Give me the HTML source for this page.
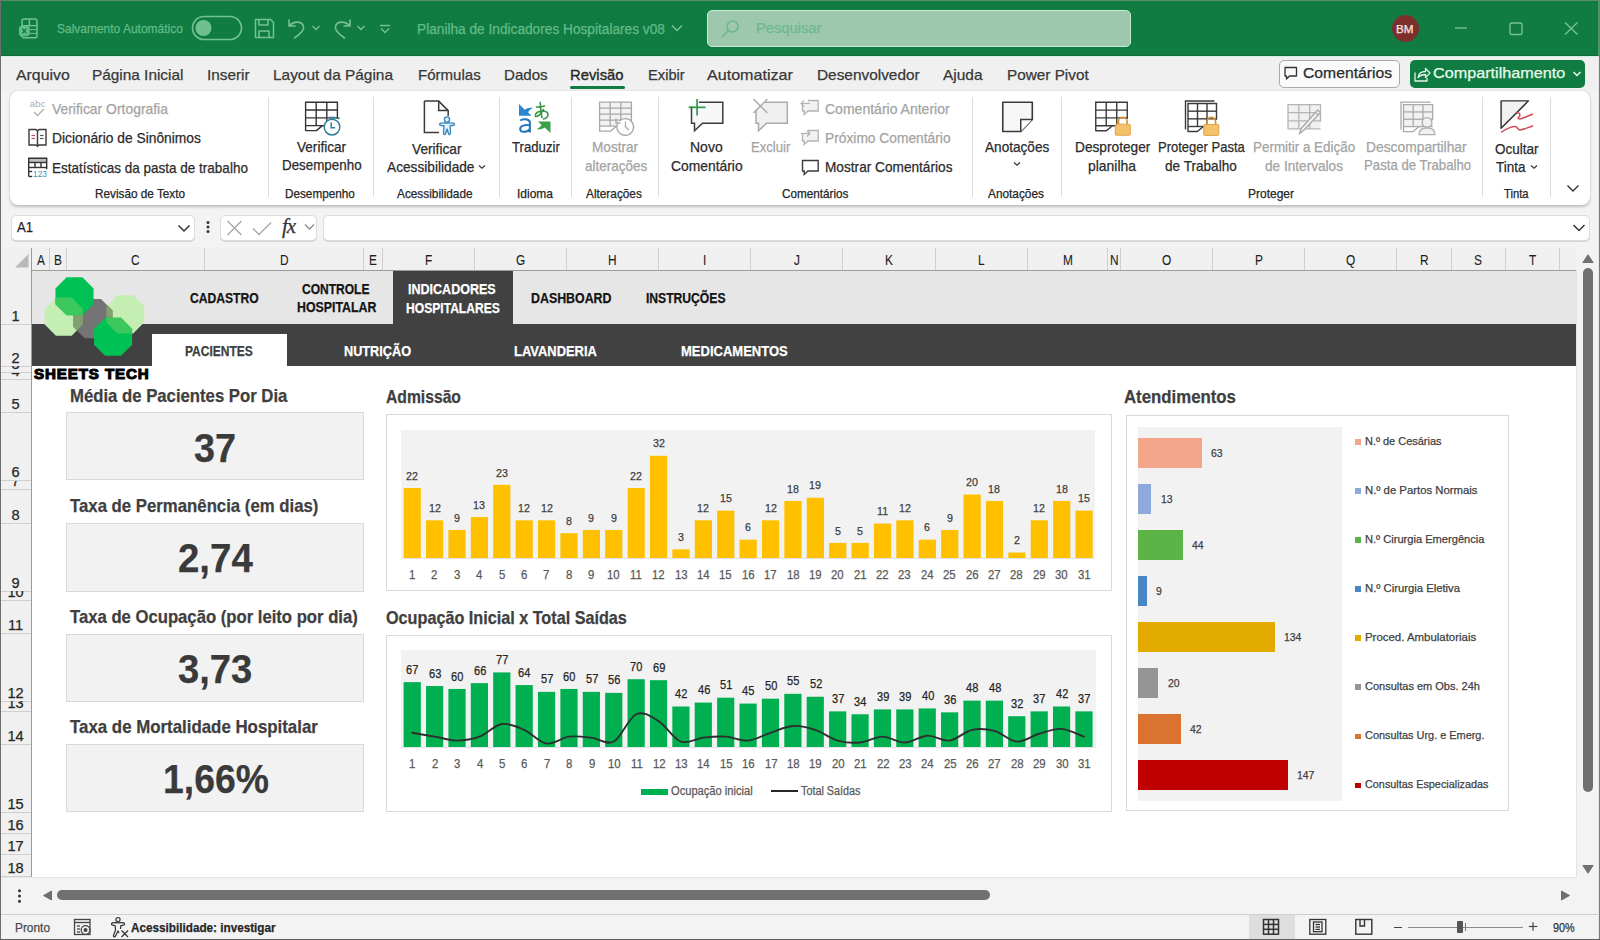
<!DOCTYPE html><html><head><meta charset="utf-8"><title>Excel - Indicadores Hospitalares</title><style>
*{margin:0;padding:0;box-sizing:border-box}
html,body{width:1600px;height:940px;overflow:hidden}
body{position:relative;background:#f3f3f3;font-family:"Liberation Sans",sans-serif}
.a{position:absolute}
.t{position:absolute;white-space:nowrap;transform-origin:0 0;line-height:1;-webkit-text-stroke:0.25px currentColor}
svg.a{overflow:visible}
</style></head><body>
<div class="a" style="left:0px;top:0px;width:1600px;height:56px;background:#107c41;"></div>
<div class="a" style="left:0px;top:0px;width:1600px;height:1px;background:#5b8a6c;"></div>
<svg class="a" style="left:16px;top:16px;" width="24" height="24" viewBox="0 0 24 24"><g fill="none" stroke="#76c193" stroke-width="1.5">
<rect x="6" y="3" width="15" height="18.8" rx="2"/><line x1="13.4" y1="3" x2="13.4" y2="10"/><line x1="6" y1="9.7" x2="21" y2="9.7"/><line x1="13.4" y1="13.6" x2="21" y2="13.6" stroke-width="1"/><line x1="13.4" y1="17.4" x2="21" y2="17.4" stroke-width="1"/></g>
<rect x="3.4" y="10.2" width="9.8" height="9.6" rx="2" fill="#5fbf8a" stroke="#5fbf8a" stroke-width="1"/>
<path d="M6.2 12.6 L10.4 17.4 M10.4 12.6 L6.2 17.4" stroke="#13763f" stroke-width="1.4"/></svg>
<span class="t" style="left:57.00px;top:22.03px;font-size:13.2px;color:#62bb88;transform:scaleX(0.9087);">Salvamento Automático</span>
<svg class="a" style="left:191px;top:15px;" width="52" height="26" viewBox="0 0 52 26"><rect x="1.5" y="1.5" width="49" height="23" rx="11.5" fill="none" stroke="#76c193" stroke-width="1.6"/><circle cx="12.5" cy="13" r="8" fill="#6fc08f"/></svg>
<svg class="a" style="left:253px;top:17px;" width="24" height="24" viewBox="0 0 24 24"><g fill="none" stroke="#76c193" stroke-width="1.5" stroke-linejoin="round"><path d="M2.5 2.5h15l3 3v15h-18z"/><path d="M6 2.5v5.5h9v-5.5"/><path d="M6 20.5v-6.5h10v6.5"/></g></svg>
<svg class="a" style="left:285px;top:17px;" width="24" height="24" viewBox="0 0 24 24"><g fill="none" stroke="#76c193" stroke-width="1.6" stroke-linecap="round" stroke-linejoin="round"><path d="M4 3v6h6"/><path d="M4.5 9 C8 4, 17 3.5, 18.5 9.5 C19.5 13, 16 16.5, 9.5 21"/></g></svg>
<svg class="a" style="left:310px;top:23px;" width="12" height="9" viewBox="0 0 12 9"><path d="M2.5 3 L6 6.5 L9.5 3" fill="none" stroke="#76c193" stroke-width="1.4"/></svg>
<svg class="a" style="left:330px;top:17px;" width="24" height="24" viewBox="0 0 24 24"><g fill="none" stroke="#76c193" stroke-width="1.6" stroke-linecap="round" stroke-linejoin="round"><path d="M20 3v6h-6"/><path d="M19.5 9 C16 4, 7 3.5, 5.5 9.5 C4.5 13, 8 16.5, 14.5 21"/></g></svg>
<svg class="a" style="left:355px;top:23px;" width="12" height="9" viewBox="0 0 12 9"><path d="M2.5 3 L6 6.5 L9.5 3" fill="none" stroke="#76c193" stroke-width="1.4"/></svg>
<svg class="a" style="left:378px;top:23px;" width="14" height="12" viewBox="0 0 14 12"><g fill="none" stroke="#76c193" stroke-width="1.4"><line x1="2" y1="2.5" x2="12" y2="2.5"/><path d="M3 5.5 L7 9.5 L11 5.5"/></g></svg>
<span class="t" style="left:417.00px;top:22.92px;font-size:13.8px;color:#62bb88;transform:scaleX(0.9916);">Planilha de Indicadores Hospitalares v08</span>
<svg class="a" style="left:669px;top:22px;" width="16" height="12" viewBox="0 0 16 12"><path d="M3 3.5 L8 8.5 L13 3.5" fill="none" stroke="#76c193" stroke-width="1.5"/></svg>
<div class="a" style="left:707px;top:10px;width:424px;height:37px;background:#9ec8ae;border:1px solid #c6ebd3;border-radius:5px;"></div>
<svg class="a" style="left:719px;top:17px;" width="24" height="24" viewBox="0 0 24 24"><g fill="none" stroke="#6db98a" stroke-width="1.6"><circle cx="13.5" cy="9.5" r="5.5"/><line x1="9.5" y1="13.5" x2="3.5" y2="19.5" stroke-linecap="round"/></g></svg>
<span class="t" style="left:755.60px;top:21.33px;font-size:14.5px;color:#6db98a;transform:scaleX(1.0141);">Pesquisar</span>
<div class="a" style="left:1391.5px;top:14.5px;width:27px;height:27px;border-radius:50%;background:#7d302b"></div>
<span class="t" style="left:1396.45px;top:23.66px;font-size:10.8px;color:#f5e6e4;transform:scaleX(1.0802);">BM</span>
<svg class="a" style="left:1450px;top:20px;" width="24" height="16" viewBox="0 0 24 16"><line x1="5" y1="8" x2="17" y2="8" stroke="#76c193" stroke-width="1.4"/></svg>
<svg class="a" style="left:1505px;top:18px;" width="20" height="20" viewBox="0 0 20 20"><rect x="5" y="5" width="12" height="11.5" rx="2" fill="none" stroke="#76c193" stroke-width="1.4"/></svg>
<svg class="a" style="left:1560px;top:18px;" width="22" height="20" viewBox="0 0 22 20"><path d="M5 4.5 L17.5 16.5 M17.5 4.5 L5 16.5" stroke="#76c193" stroke-width="1.4"/></svg>
<div class="a" style="left:0px;top:56px;width:1600px;height:35px;background:#f0f0f0;"></div>
<div class="a" style="left:0px;top:55px;width:1600px;height:1px;background:#0e6b38;"></div>
<div class="a" style="left:0px;top:56px;width:1600px;height:1px;background:#d2f1dc;"></div>
<span class="t" style="left:15.90px;top:67.10px;font-size:15px;color:#383838;transform:scaleX(1.0580);">Arquivo</span>
<span class="t" style="left:92.40px;top:67.10px;font-size:15px;color:#383838;transform:scaleX(1.0245);">Página Inicial</span>
<span class="t" style="left:206.50px;top:67.10px;font-size:15px;color:#383838;transform:scaleX(1.0201);">Inserir</span>
<span class="t" style="left:273.00px;top:67.10px;font-size:15px;color:#383838;transform:scaleX(1.0276);">Layout da Página</span>
<span class="t" style="left:418.00px;top:67.10px;font-size:15px;color:#383838;transform:scaleX(1.0030);">Fórmulas</span>
<span class="t" style="left:503.70px;top:67.10px;font-size:15px;color:#383838;transform:scaleX(1.0058);">Dados</span>
<span class="t" style="left:570.00px;top:67.10px;font-size:15px;color:#262626;transform:scaleX(0.9873);-webkit-text-stroke:0.35px #262626;">Revisão</span>
<span class="t" style="left:647.60px;top:67.10px;font-size:15px;color:#383838;transform:scaleX(0.9787);">Exibir</span>
<span class="t" style="left:707.00px;top:67.10px;font-size:15px;color:#383838;transform:scaleX(1.0734);">Automatizar</span>
<span class="t" style="left:817.00px;top:67.10px;font-size:15px;color:#383838;transform:scaleX(1.0255);">Desenvolvedor</span>
<span class="t" style="left:943.00px;top:67.10px;font-size:15px;color:#383838;transform:scaleX(1.0313);">Ajuda</span>
<span class="t" style="left:1006.60px;top:67.10px;font-size:15px;color:#383838;transform:scaleX(1.0209);">Power Pivot</span>
<div class="a" style="left:570px;top:85.5px;width:55px;height:3px;border-radius:1.5px;background:#107c41"></div>
<div class="a" style="left:1278.5px;top:60px;width:121.0px;height:27.5px;background:#fafafa;border:1px solid #a9a9a9;border-radius:5px;"></div>
<svg class="a" style="left:1283px;top:66px;" width="16" height="16" viewBox="0 0 16 16"><path d="M2 1.5h11.5v8.5h-7l-3 3v-3h-1.5z" fill="none" stroke="#333" stroke-width="1.3" stroke-linejoin="round"/></svg>
<span class="t" style="left:1302.50px;top:65.16px;font-size:15.4px;color:#2a2a2a;transform:scaleX(1.0216);">Comentários</span>
<div class="a" style="left:1409.5px;top:60px;width:175.5px;height:27.5px;background:#107c41;border-radius:5px;"></div>
<svg class="a" style="left:1412px;top:64px;" width="20" height="20" viewBox="0 0 20 20"><g fill="none" stroke="#e8f5ec" stroke-width="1.3" stroke-linejoin="round"><path d="M3 8.5v8.5h12v-3"/><path d="M6 13.5c0.5-4 3-6 7.5-6v-3l4.5 4.5-4.5 4.5v-3c-3 0-5.5 1-7.5 3z"/></g></svg>
<span class="t" style="left:1433.20px;top:65.16px;font-size:15.4px;color:#e6fbec;transform:scaleX(1.0523);">Compartilhamento</span>
<svg class="a" style="left:1571px;top:69px;" width="12" height="10" viewBox="0 0 12 10"><path d="M2.5 3 L6 6.5 L9.5 3" fill="none" stroke="#f2faf4" stroke-width="1.4"/></svg>
<div class="a" style="left:10px;top:91px;width:1580px;height:114px;background:#fff;border-radius:8px;box-shadow:0 1.5px 3px rgba(0,0,0,0.22),0 0 1px rgba(0,0,0,0.14)"></div>
<div class="a" style="left:267.9px;top:96.5px;width:1.0px;height:100.5px;background:#dcdcdc;"></div>
<div class="a" style="left:372.9px;top:96.5px;width:1.0px;height:100.5px;background:#dcdcdc;"></div>
<div class="a" style="left:498.7px;top:96.5px;width:1.0px;height:100.5px;background:#dcdcdc;"></div>
<div class="a" style="left:571.3px;top:96.5px;width:1.0px;height:100.5px;background:#dcdcdc;"></div>
<div class="a" style="left:657.9px;top:96.5px;width:1.0px;height:100.5px;background:#dcdcdc;"></div>
<div class="a" style="left:972.3px;top:96.5px;width:1.0px;height:100.5px;background:#dcdcdc;"></div>
<div class="a" style="left:1060.8px;top:96.5px;width:1.0px;height:100.5px;background:#dcdcdc;"></div>
<div class="a" style="left:1482.0px;top:96.5px;width:1.0px;height:100.5px;background:#dcdcdc;"></div>
<div class="a" style="left:1549.9px;top:96.5px;width:1.0px;height:100.5px;background:#dcdcdc;"></div>
<svg class="a" style="left:27px;top:98px;" width="22" height="21" viewBox="0 0 22 21"><text x="2.5" y="8.5" font-family="Liberation Sans" font-size="9.5" fill="#b0b0b0" textLength="16" lengthAdjust="spacingAndGlyphs">abc</text><path d="M7 14 L10.5 17.5 L17 11" fill="none" stroke="#b0b0b0" stroke-width="1.3"/></svg>
<span class="t" style="left:52.00px;top:101.74px;font-size:14.6px;color:#a3a3a3;transform:scaleX(0.9529);">Verificar Ortografia</span>
<svg class="a" style="left:27px;top:128px;" width="22" height="20" viewBox="0 0 22 20"><g fill="none" stroke="#3a3a3a" stroke-width="1.4"><path d="M2 1.5h7l1.5 1.5 1.5-1.5h7v15.5h-7l-1.5 1.3-1.5-1.3h-7z"/><line x1="10.5" y1="3" x2="10.5" y2="17.5"/></g><g stroke-width="1.2"><line x1="4.5" y1="7.5" x2="8" y2="7.5" stroke="#c0505a"/><line x1="4.5" y1="10.5" x2="8" y2="10.5" stroke="#c0505a"/><line x1="13" y1="7.5" x2="16.5" y2="7.5" stroke="#555"/><line x1="13" y1="10.5" x2="16.5" y2="10.5" stroke="#555"/></g></svg>
<span class="t" style="left:52.00px;top:131.24px;font-size:14.6px;color:#2b2b2b;transform:scaleX(0.9465);">Dicionário de Sinônimos</span>
<svg class="a" style="left:27px;top:157px;" width="22" height="22" viewBox="0 0 22 22"><rect x="1.7" y="1.3" width="18" height="4.2" fill="#bdbdbd"/><g fill="none" stroke="#333" stroke-width="1.4"><path d="M1.7 19.5v-18.2h18v11"/><line x1="1.7" y1="5.5" x2="19.7" y2="5.5"/><line x1="1.7" y1="10.5" x2="19.7" y2="10.5"/><line x1="8" y1="5.5" x2="8" y2="10.5"/><line x1="14" y1="5.5" x2="14" y2="10.5"/><path d="M1.7 19.5h3.5"/><path d="M1.7 14.5h3.5"/></g><text x="6" y="19.6" font-family="Liberation Sans" font-size="9" fill="#3f8fb5" textLength="14" lengthAdjust="spacingAndGlyphs">123</text></svg>
<span class="t" style="left:52.00px;top:160.64px;font-size:14.6px;color:#2b2b2b;transform:scaleX(0.9252);">Estatísticas da pasta de trabalho</span>
<span class="t" style="left:95.40px;top:188.83px;font-size:11.9px;color:#262626;transform:scaleX(0.9894);">Revisão de Texto</span>
<svg class="a" style="left:300px;top:98px;" width="48" height="42" viewBox="0 0 48 42"><path d="M5.6 27.6 V4.3 H37.4 V20.833333333333332" fill="none" stroke="#333" stroke-width="1.4"/><line x1="5.6" y1="12.066666666666666" x2="37.4" y2="12.066666666666666" stroke="#333" stroke-width="1.4"/><line x1="5.6" y1="19.833333333333332" x2="37.4" y2="19.833333333333332" stroke="#333" stroke-width="1.4"/><line x1="5.6" y1="27.6" x2="37.4" y2="27.6" stroke="#333" stroke-width="1.4"/><line x1="16.2" y1="4.3" x2="16.2" y2="27.6" stroke="#333" stroke-width="1.4"/><line x1="26.799999999999997" y1="4.3" x2="26.799999999999997" y2="27.6" stroke="#333" stroke-width="1.4"/><path d="M5.6 27.6 V32.6 H16.38 L22.38 27.6" fill="none" stroke="#333" stroke-width="1.4" stroke-linejoin="round"/><g fill="#fff" stroke="#2f7f9c" stroke-width="1.5"><circle cx="32" cy="29.1" r="7.8"/></g><g stroke="#2f7f9c" stroke-width="1.5" fill="none"><line x1="29" y1="19.5" x2="35" y2="19.5"/><line x1="32" y1="19.5" x2="32" y2="21.3"/><line x1="38" y1="21" x2="39.5" y2="19.5"/><path d="M31.2 24.5v5.3h4"/></g></svg>
<span class="t" style="left:297.00px;top:140.04px;font-size:14.6px;color:#2b2b2b;transform:scaleX(0.9309);">Verificar</span>
<span class="t" style="left:282.00px;top:158.44px;font-size:14.6px;color:#2b2b2b;transform:scaleX(0.9167);">Desempenho</span>
<span class="t" style="left:285.20px;top:188.83px;font-size:11.9px;color:#262626;transform:scaleX(0.9862);">Desempenho</span>
<svg class="a" style="left:420px;top:98px;" width="40" height="40" viewBox="0 0 40 40"><path d="M4.4 3.1h14.3l9.5 9.5v5.5 M19 34.5h-14.6v-31.4" fill="none" stroke="#3a3a3a" stroke-width="1.5"/><path d="M18.7 3.1v9.5h9.5" fill="none" stroke="#3a3a3a" stroke-width="1.5"/><g fill="#e6f4fb" stroke="#3a88bf" stroke-width="1.4" stroke-linejoin="round"><circle cx="27" cy="21.5" r="2.6"/><path d="M20 25.5 C22 24.5,24.5 25,27 25 C29.5 25,32 24.5,34 25.5 C35 26.2,34.5 27.5,33 27.5 L30 27.8 L30.5 35 C30.5 37,28.8 37,28.5 35.5 L27 31 L25.5 35.5 C25 37,23.5 37,23.5 35 L24 27.8 L21 27.5 C19.5 27.5,19 26.2,20 25.5z"/></g></svg>
<span class="t" style="left:412.00px;top:141.64px;font-size:14.6px;color:#2b2b2b;transform:scaleX(0.9385);">Verificar</span>
<span class="t" style="left:386.70px;top:159.54px;font-size:14.6px;color:#2b2b2b;transform:scaleX(0.9375);">Acessibilidade</span>
<svg class="a" style="left:476px;top:162px;" width="12" height="10" viewBox="0 0 12 10"><path d="M3 3.5 L6 6.3 L9 3.5" fill="none" stroke="#333" stroke-width="1.2"/></svg>
<span class="t" style="left:397.30px;top:188.83px;font-size:11.9px;color:#262626;transform:scaleX(0.9938);">Acessibilidade</span>
<svg class="a" style="left:514px;top:98px;" width="40" height="38" viewBox="0 0 40 38"><path d="M5 6 L5 17.8 L17.5 17.8 L14 14.3 C15.2 12.3,16.8 10.8,19 10 C15.8 9.5,13 10.2,10.8 11.8 Z" fill="#2a86d1"/><path d="M6.3 22.6 C8 20.6,14.8 20.4,15.9 24 L15.9 34.6 M15.9 27.2 C10.5 26.6,6.2 27.6,6.2 30.9 C6.2 34.6,13 34.9,15.9 30.8" fill="none" stroke="#2677bd" stroke-width="2"/><g fill="none" stroke="#3b9447" stroke-width="1.6" stroke-linecap="round"><path d="M22.5 9 C25 9.3,28 8.8,30.5 8"/><path d="M26.2 4.5 C26.5 9,26.8 14,28 19.5"/><path d="M29.5 11.5 C27.5 15,25 18,22.5 18.5 C20.5 18.8,21 15,24.5 13.8 C28.5 12.5,33.5 13,34 16 C34.5 18.5,32 20.5,29.5 21"/></g><path d="M36.5 35 L36.5 23.5 L24 23.5 L27.5 27 C26.3 29,24.7 30.5,22.5 31.3 C25.7 31.8,28.5 31.1,30.7 29.5 Z" fill="#3aa14b"/></svg>
<span class="t" style="left:512.20px;top:140.14px;font-size:14.6px;color:#2b2b2b;transform:scaleX(0.9019);">Traduzir</span>
<span class="t" style="left:516.50px;top:188.83px;font-size:11.9px;color:#262626;transform:scaleX(1.0076);">Idioma</span>
<svg class="a" style="left:594px;top:98px;" width="44" height="40" viewBox="0 0 44 40"><rect x="5.6" y="4.2" width="31.8" height="24" fill="#f3f3f3"/><path d="M5.6 28.2 V4.2 H37.4 V23.2" fill="none" stroke="#a8a8a8" stroke-width="1.3"/><line x1="5.6" y1="10.2" x2="37.4" y2="10.2" stroke="#a8a8a8" stroke-width="1.3"/><line x1="5.6" y1="16.2" x2="37.4" y2="16.2" stroke="#a8a8a8" stroke-width="1.3"/><line x1="5.6" y1="22.2" x2="37.4" y2="22.2" stroke="#a8a8a8" stroke-width="1.3"/><line x1="5.6" y1="28.2" x2="37.4" y2="28.2" stroke="#a8a8a8" stroke-width="1.3"/><line x1="16.2" y1="4.2" x2="16.2" y2="28.2" stroke="#a8a8a8" stroke-width="1.3"/><line x1="26.799999999999997" y1="4.2" x2="26.799999999999997" y2="28.2" stroke="#a8a8a8" stroke-width="1.3"/><path d="M5.6 28.2 V33.2 H16.38 L22.38 28.2" fill="none" stroke="#a8a8a8" stroke-width="1.3" stroke-linejoin="round"/><g fill="#fff" stroke="#a8a8a8" stroke-width="1.4"><path d="M23.5 26 A8.3 8.3 0 1 0 25.5 23"/></g><g fill="none" stroke="#a8a8a8" stroke-width="1.3"><path d="M22 20.5v4.5h4.5"/><path d="M31.5 23.5v5.5l3.5 3"/></g></svg>
<span class="t" style="left:592.30px;top:140.14px;font-size:14.6px;color:#a3a3a3;transform:scaleX(0.9314);">Mostrar</span>
<span class="t" style="left:584.80px;top:158.84px;font-size:14.6px;color:#a3a3a3;transform:scaleX(0.9261);">alterações</span>
<span class="t" style="left:586.25px;top:188.83px;font-size:11.9px;color:#262626;transform:scaleX(0.9942);">Alterações</span>
<svg class="a" style="left:684px;top:96px;" width="44" height="38" viewBox="0 0 44 38"><path d="M7.5 10.2 V27.3 H10.5 L10.5 34.8 L18.5 27.3 H38.8 V6.3 H15" fill="#f7f7f7" stroke="#3c3c3c" stroke-width="1.5" stroke-linejoin="miter"/><g stroke="#2e9a4a" stroke-width="1.7"><line x1="13.1" y1="3" x2="13.1" y2="19.6"/><line x1="4.6" y1="11.35" x2="21.6" y2="11.35"/></g></svg>
<span class="t" style="left:690.30px;top:140.24px;font-size:14.6px;color:#2b2b2b;transform:scaleX(0.9592);">Novo</span>
<span class="t" style="left:670.60px;top:158.84px;font-size:14.6px;color:#2b2b2b;transform:scaleX(0.9499);">Comentário</span>
<svg class="a" style="left:749px;top:96px;" width="44" height="38" viewBox="0 0 44 38"><path d="M7 14 V27.3 H9.5 L9.5 34.8 L17.5 27.3 H38.3 V6.3 H16" fill="#f0f0f0" stroke="#ababab" stroke-width="1.5"/><g stroke="#ababab" stroke-width="1.4"><line x1="4.4" y1="3" x2="18.4" y2="17"/><line x1="18.4" y1="3" x2="4.4" y2="17"/></g></svg>
<span class="t" style="left:751.25px;top:140.24px;font-size:14.6px;color:#a3a3a3;transform:scaleX(0.8973);">Excluir</span>
<svg class="a" style="left:799px;top:99px;" width="22" height="18" viewBox="0 0 22 18"><path d="M3.5 5 V12 H5.2 L5.2 15.5 L9 12 H19.2 V1.5 H9" fill="#f2f2f2" stroke="#b3b3b3" stroke-width="1.3"/><g fill="none" stroke="#b3b3b3" stroke-width="1.2"><line x1="2" y1="4.5" x2="11" y2="4.5"/><path d="M5 1.5 L2 4.5 L5 7.5"/></g></svg>
<svg class="a" style="left:799px;top:129px;" width="22" height="18" viewBox="0 0 22 18"><path d="M3.5 5 V12 H5.2 L5.2 15.5 L9 12 H19.2 V1.5 H9" fill="#f2f2f2" stroke="#b3b3b3" stroke-width="1.3"/><g fill="none" stroke="#b3b3b3" stroke-width="1.2"><line x1="2" y1="4.5" x2="11" y2="4.5"/><path d="M8 1.5 L11 4.5 L8 7.5"/></g></svg>
<svg class="a" style="left:799px;top:159px;" width="22" height="18" viewBox="0 0 22 18"><path d="M3.5 1.5 V12 H5.2 L5.2 15.5 L9 12 H19.2 V1.5 Z" fill="#fff" stroke="#3a3a3a" stroke-width="1.4"/></svg>
<span class="t" style="left:825.00px;top:101.84px;font-size:14.6px;color:#a3a3a3;transform:scaleX(0.9605);">Comentário Anterior</span>
<span class="t" style="left:825.00px;top:130.84px;font-size:14.6px;color:#a3a3a3;transform:scaleX(0.9438);">Próximo Comentário</span>
<span class="t" style="left:825.00px;top:159.94px;font-size:14.6px;color:#2b2b2b;transform:scaleX(0.9355);">Mostrar Comentários</span>
<span class="t" style="left:781.90px;top:188.83px;font-size:11.9px;color:#262626;transform:scaleX(0.9856);">Comentários</span>
<svg class="a" style="left:998px;top:98px;" width="40" height="38" viewBox="0 0 40 38"><path d="M4.75 4.25 H34.3 V21.5 L22.75 33.5 H4.75 Z" fill="#f6f6f6" stroke="#3a3a3a" stroke-width="1.6" stroke-linejoin="round"/><path d="M34.3 21.5 H22.75 V33.5" fill="#fff" stroke="#3a3a3a" stroke-width="1.5"/></svg>
<span class="t" style="left:985.30px;top:140.14px;font-size:14.6px;color:#2b2b2b;transform:scaleX(0.9321);">Anotações</span>
<svg class="a" style="left:1011px;top:159px;" width="12" height="10" viewBox="0 0 12 10"><path d="M3 3.5 L6 6.3 L9 3.5" fill="none" stroke="#333" stroke-width="1.2"/></svg>
<span class="t" style="left:988.10px;top:188.83px;font-size:11.9px;color:#262626;transform:scaleX(0.9942);">Anotações</span>
<svg class="a" style="left:1090px;top:98px;" width="44" height="40" viewBox="0 0 44 40"><path d="M5.75 27.75 V4.25 H37.25 V20.916666666666664" fill="none" stroke="#3a3a3a" stroke-width="1.4"/><line x1="5.75" y1="12.083333333333332" x2="37.25" y2="12.083333333333332" stroke="#3a3a3a" stroke-width="1.4"/><line x1="5.75" y1="19.916666666666664" x2="37.25" y2="19.916666666666664" stroke="#3a3a3a" stroke-width="1.4"/><line x1="5.75" y1="27.75" x2="37.25" y2="27.75" stroke="#3a3a3a" stroke-width="1.4"/><line x1="16.25" y1="4.25" x2="16.25" y2="27.75" stroke="#3a3a3a" stroke-width="1.4"/><line x1="26.75" y1="4.25" x2="26.75" y2="27.75" stroke="#3a3a3a" stroke-width="1.4"/><path d="M5.75 27.75 V32.75 H16.4 L22.4 27.75" fill="none" stroke="#3a3a3a" stroke-width="1.4" stroke-linejoin="round"/><g><path d="M28.5 26 V23.5 A4.3 4.3 0 0 1 37.1 23.5 V26" fill="none" stroke="#d9902a" stroke-width="1.6"/><rect x="25.3" y="26.2" width="15" height="11" rx="1" fill="#f3c26b" stroke="#e0a040" stroke-width="1"/></g></svg>
<span class="t" style="left:1074.60px;top:140.14px;font-size:14.6px;color:#2b2b2b;transform:scaleX(0.9386);">Desproteger</span>
<span class="t" style="left:1088.00px;top:158.84px;font-size:14.6px;color:#2b2b2b;transform:scaleX(0.9529);">planilha</span>
<svg class="a" style="left:1180px;top:96px;" width="44" height="42" viewBox="0 0 44 42"><path d="M8 30.5 V7.5 H36.5 V23.833333333333336" fill="none" stroke="#3a3a3a" stroke-width="1.4"/><line x1="8" y1="15.166666666666668" x2="36.5" y2="15.166666666666668" stroke="#3a3a3a" stroke-width="1.4"/><line x1="8" y1="22.833333333333336" x2="36.5" y2="22.833333333333336" stroke="#3a3a3a" stroke-width="1.4"/><line x1="8" y1="30.5" x2="36.5" y2="30.5" stroke="#3a3a3a" stroke-width="1.4"/><line x1="17.5" y1="7.5" x2="17.5" y2="30.5" stroke="#3a3a3a" stroke-width="1.4"/><line x1="27.0" y1="7.5" x2="27.0" y2="30.5" stroke="#3a3a3a" stroke-width="1.4"/><path d="M8 30.5 V35.5 H17.35 L23.35 30.5" fill="none" stroke="#3a3a3a" stroke-width="1.4" stroke-linejoin="round"/><path d="M5.5 33.5 V5.0 H34.5" fill="none" stroke="#3a3a3a" stroke-width="1.4"/><g><path d="M27.0 28.2 V25.7 A4.3 4.3 0 0 1 35.6 25.7 V28.2" fill="none" stroke="#d9902a" stroke-width="1.6"/><rect x="23.8" y="28.4" width="15" height="11" rx="1" fill="#f3c26b" stroke="#e0a040" stroke-width="1"/></g></svg>
<span class="t" style="left:1157.90px;top:140.14px;font-size:14.6px;color:#2b2b2b;transform:scaleX(0.8910);">Proteger Pasta</span>
<span class="t" style="left:1165.40px;top:158.84px;font-size:14.6px;color:#2b2b2b;transform:scaleX(0.9310);">de Trabalho</span>
<svg class="a" style="left:1283px;top:98px;" width="44" height="40" viewBox="0 0 44 40"><rect x="5" y="6.6" width="32.5" height="24.3" fill="#f0f0f0"/><path d="M5 30.9 V6.6 H37.5 V23.799999999999997" fill="none" stroke="#b5b5b5" stroke-width="1.3"/><line x1="5" y1="14.7" x2="37.5" y2="14.7" stroke="#b5b5b5" stroke-width="1.3"/><line x1="5" y1="22.799999999999997" x2="37.5" y2="22.799999999999997" stroke="#b5b5b5" stroke-width="1.3"/><line x1="5" y1="30.9" x2="37.5" y2="30.9" stroke="#b5b5b5" stroke-width="1.3"/><line x1="15.833333333333334" y1="6.6" x2="15.833333333333334" y2="30.9" stroke="#b5b5b5" stroke-width="1.3"/><line x1="26.666666666666668" y1="6.6" x2="26.666666666666668" y2="30.9" stroke="#b5b5b5" stroke-width="1.3"/><g><path d="M37.5 14.5 L21 32 L16.5 35.8 L18.2 30.5 L34.6 12 Z" fill="#f4f4f4" stroke="#ababab" stroke-width="1.4" stroke-linejoin="round"/><line x1="32.5" y1="14.5" x2="35.5" y2="17.3" stroke="#ababab" stroke-width="1.2"/></g></svg>
<span class="t" style="left:1253.10px;top:140.14px;font-size:14.6px;color:#a3a3a3;transform:scaleX(0.9192);">Permitir a Edição</span>
<span class="t" style="left:1264.75px;top:158.84px;font-size:14.6px;color:#a3a3a3;transform:scaleX(0.9332);">de Intervalos</span>
<svg class="a" style="left:1396px;top:96px;" width="44" height="42" viewBox="0 0 44 42"><rect x="7.5" y="8.6" width="29.2" height="22" fill="#f1f1f1"/><path d="M7.5 30.6 V8.6 H36.7 V24.266666666666666" fill="none" stroke="#aaaaaa" stroke-width="1.3"/><line x1="7.5" y1="15.933333333333334" x2="36.7" y2="15.933333333333334" stroke="#aaaaaa" stroke-width="1.3"/><line x1="7.5" y1="23.266666666666666" x2="36.7" y2="23.266666666666666" stroke="#aaaaaa" stroke-width="1.3"/><line x1="7.5" y1="30.6" x2="36.7" y2="30.6" stroke="#aaaaaa" stroke-width="1.3"/><line x1="17.233333333333334" y1="8.6" x2="17.233333333333334" y2="30.6" stroke="#aaaaaa" stroke-width="1.3"/><line x1="26.966666666666665" y1="8.6" x2="26.966666666666665" y2="30.6" stroke="#aaaaaa" stroke-width="1.3"/><path d="M7.5 30.6 V35.6 H17.153333333333332 L23.153333333333332 30.6" fill="none" stroke="#aaaaaa" stroke-width="1.3" stroke-linejoin="round"/><path d="M5.0 33.6 V6.1 H34.7" fill="none" stroke="#aaaaaa" stroke-width="1.3"/><g fill="#f1f1f1" stroke="#b0b0b0" stroke-width="1.4"><circle cx="31" cy="26.4" r="4.8"/><path d="M23 38.6 C23 34,26.5 32,31 32 C35.5 32,39 34,39 38.6 Z"/></g></svg>
<span class="t" style="left:1366.30px;top:139.99px;font-size:14.6px;color:#a3a3a3;transform:scaleX(0.9474);">Descompartilhar</span>
<span class="t" style="left:1363.60px;top:158.44px;font-size:14.6px;color:#a3a3a3;transform:scaleX(0.9045);">Pasta de Trabalho</span>
<span class="t" style="left:1248.40px;top:188.83px;font-size:11.9px;color:#262626;transform:scaleX(1.0080);">Proteger</span>
<svg class="a" style="left:1496px;top:96px;" width="42" height="40" viewBox="0 0 42 40"><path d="M5.1 4.85 H32.5 L5.1 32.3 Z" fill="#f1f1f1" stroke="#333" stroke-width="1.45" stroke-linejoin="round"/><g fill="none" stroke="#cf4a5a" stroke-width="1.5" stroke-linecap="round"><path d="M21 16.5 C24 17,25 19.5,22.5 21.5 C21 23,24 23.5,27 22 L36.5 18.3"/><path d="M5.5 36 C10 33,15 30.5,19.5 30.5 C22 30.5,21 34.5,24.5 34 C28 33.5,32 31.5,36.5 30"/></g></svg>
<span class="t" style="left:1495.20px;top:141.64px;font-size:14.6px;color:#2b2b2b;transform:scaleX(0.9225);">Ocultar</span>
<span class="t" style="left:1495.70px;top:159.54px;font-size:14.6px;color:#2b2b2b;transform:scaleX(0.9237);">Tinta</span>
<svg class="a" style="left:1528px;top:162px;" width="12" height="10" viewBox="0 0 12 10"><path d="M3 3.5 L6 6.3 L9 3.5" fill="none" stroke="#333" stroke-width="1.2"/></svg>
<span class="t" style="left:1504.00px;top:188.83px;font-size:11.9px;color:#262626;transform:scaleX(0.9412);">Tinta</span>
<svg class="a" style="left:1563px;top:181px;" width="20" height="14" viewBox="0 0 20 14"><path d="M4.5 4.5 L10 10 L15.5 4.5" fill="none" stroke="#333" stroke-width="1.4"/></svg>
<div class="a" style="left:10.5px;top:214.5px;width:184.5px;height:26.5px;background:#fff;border:1px solid #dcdcdc;border-radius:5px;box-shadow:0 1px 0 #d2d2d2;"></div>
<span class="t" style="left:17.00px;top:218.93px;font-size:15.2px;color:#262626;transform:scaleX(0.8610);">A1</span>
<svg class="a" style="left:174px;top:220px;" width="20" height="16" viewBox="0 0 20 16"><path d="M4.5 5.5 L10 11 L15.5 5.5" fill="none" stroke="#333" stroke-width="1.5"/></svg>
<svg class="a" style="left:204px;top:218px;" width="8" height="18" viewBox="0 0 8 18"><g fill="#333"><circle cx="4" cy="4.5" r="1.5"/><circle cx="4" cy="9" r="1.5"/><circle cx="4" cy="13.5" r="1.5"/></g></svg>
<div class="a" style="left:220px;top:214.5px;width:97px;height:26.5px;background:#fff;border:1px solid #dcdcdc;border-radius:5px;box-shadow:0 1px 0 #d2d2d2;"></div>
<svg class="a" style="left:224px;top:219px;" width="20" height="18" viewBox="0 0 20 18"><path d="M3.5 2 L17.5 16 M17.5 2 L3.5 16" stroke="#a8a8a8" stroke-width="1.4"/></svg>
<svg class="a" style="left:250px;top:219px;" width="24" height="18" viewBox="0 0 24 18"><path d="M3 9.5 L9 15.5 L21 3.5" fill="none" stroke="#a8a8a8" stroke-width="1.4"/></svg>
<span class="t" style="left:282px;top:214px;font-family:'Liberation Serif';font-style:italic;font-size:21px;line-height:24px;color:#333;letter-spacing:-1px">fx</span>
<svg class="a" style="left:302px;top:220px;" width="16" height="14" viewBox="0 0 16 14"><path d="M3 4.5 L7.5 9 L12 4.5" fill="none" stroke="#8a8a8a" stroke-width="1.3"/></svg>
<div class="a" style="left:323px;top:214.5px;width:1267px;height:26.5px;background:#fff;border:1px solid #dcdcdc;border-radius:5px;box-shadow:0 1px 0 #d2d2d2;"></div>
<svg class="a" style="left:1570px;top:220px;" width="18" height="16" viewBox="0 0 18 16"><path d="M3.5 5 L9 10.5 L14.5 5" fill="none" stroke="#333" stroke-width="1.5"/></svg>
<div class="a" style="left:1px;top:247px;width:1575px;height:23px;background:#f0f0f0;"></div>
<div class="a" style="left:49.0px;top:248px;width:1.0px;height:22px;background:#cfcfcf;"></div>
<span class="t" style="left:36.54px;top:253.52px;font-size:13.8px;color:#1e1e1e;transform:scaleX(0.8600);-webkit-text-stroke:0.1px #1e1e1e;">A</span>
<div class="a" style="left:66.0px;top:248px;width:1.0px;height:22px;background:#cfcfcf;"></div>
<span class="t" style="left:54.04px;top:253.52px;font-size:13.8px;color:#1e1e1e;transform:scaleX(0.8600);-webkit-text-stroke:0.1px #1e1e1e;">B</span>
<div class="a" style="left:203.9px;top:248px;width:1.0px;height:22px;background:#cfcfcf;"></div>
<span class="t" style="left:131.16px;top:253.52px;font-size:13.8px;color:#1e1e1e;transform:scaleX(0.8600);-webkit-text-stroke:0.1px #1e1e1e;">C</span>
<div class="a" style="left:363.1px;top:248px;width:1.0px;height:22px;background:#cfcfcf;"></div>
<span class="t" style="left:279.71px;top:253.52px;font-size:13.8px;color:#1e1e1e;transform:scaleX(0.8600);-webkit-text-stroke:0.1px #1e1e1e;">D</span>
<div class="a" style="left:381.5px;top:248px;width:1.0px;height:22px;background:#cfcfcf;"></div>
<span class="t" style="left:368.84px;top:253.52px;font-size:13.8px;color:#1e1e1e;transform:scaleX(0.8600);-webkit-text-stroke:0.1px #1e1e1e;">E</span>
<div class="a" style="left:473.9px;top:248px;width:1.0px;height:22px;background:#cfcfcf;"></div>
<span class="t" style="left:424.58px;top:253.52px;font-size:13.8px;color:#1e1e1e;transform:scaleX(0.8600);-webkit-text-stroke:0.1px #1e1e1e;">F</span>
<div class="a" style="left:565.9px;top:248px;width:1.0px;height:22px;background:#cfcfcf;"></div>
<span class="t" style="left:515.79px;top:253.52px;font-size:13.8px;color:#1e1e1e;transform:scaleX(0.8600);-webkit-text-stroke:0.1px #1e1e1e;">G</span>
<div class="a" style="left:657.9px;top:248px;width:1.0px;height:22px;background:#cfcfcf;"></div>
<span class="t" style="left:608.11px;top:253.52px;font-size:13.8px;color:#1e1e1e;transform:scaleX(0.8600);-webkit-text-stroke:0.1px #1e1e1e;">H</span>
<div class="a" style="left:749.9px;top:248px;width:1.0px;height:22px;background:#cfcfcf;"></div>
<span class="t" style="left:702.75px;top:253.52px;font-size:13.8px;color:#1e1e1e;transform:scaleX(0.8600);-webkit-text-stroke:0.1px #1e1e1e;">I</span>
<div class="a" style="left:842.1px;top:248px;width:1.0px;height:22px;background:#cfcfcf;"></div>
<span class="t" style="left:793.53px;top:253.52px;font-size:13.8px;color:#1e1e1e;transform:scaleX(0.8600);-webkit-text-stroke:0.1px #1e1e1e;">J</span>
<div class="a" style="left:934.5px;top:248px;width:1.0px;height:22px;background:#cfcfcf;"></div>
<span class="t" style="left:884.84px;top:253.52px;font-size:13.8px;color:#1e1e1e;transform:scaleX(0.8600);-webkit-text-stroke:0.1px #1e1e1e;">K</span>
<div class="a" style="left:1026.9px;top:248px;width:1.0px;height:22px;background:#cfcfcf;"></div>
<span class="t" style="left:977.91px;top:253.52px;font-size:13.8px;color:#1e1e1e;transform:scaleX(0.8600);-webkit-text-stroke:0.1px #1e1e1e;">L</span>
<div class="a" style="left:1107.1px;top:248px;width:1.0px;height:22px;background:#cfcfcf;"></div>
<span class="t" style="left:1062.56px;top:253.52px;font-size:13.8px;color:#1e1e1e;transform:scaleX(0.8600);-webkit-text-stroke:0.1px #1e1e1e;">M</span>
<div class="a" style="left:1119.9px;top:248px;width:1.0px;height:22px;background:#cfcfcf;"></div>
<span class="t" style="left:1109.71px;top:253.52px;font-size:13.8px;color:#1e1e1e;transform:scaleX(0.8600);-webkit-text-stroke:0.1px #1e1e1e;">N</span>
<div class="a" style="left:1212.0px;top:248px;width:1.0px;height:22px;background:#cfcfcf;"></div>
<span class="t" style="left:1161.84px;top:253.52px;font-size:13.8px;color:#1e1e1e;transform:scaleX(0.8600);-webkit-text-stroke:0.1px #1e1e1e;">O</span>
<div class="a" style="left:1304.0px;top:248px;width:1.0px;height:22px;background:#cfcfcf;"></div>
<span class="t" style="left:1254.54px;top:253.52px;font-size:13.8px;color:#1e1e1e;transform:scaleX(0.8600);-webkit-text-stroke:0.1px #1e1e1e;">P</span>
<div class="a" style="left:1396.0px;top:248px;width:1.0px;height:22px;background:#cfcfcf;"></div>
<span class="t" style="left:1345.89px;top:253.52px;font-size:13.8px;color:#1e1e1e;transform:scaleX(0.8600);-webkit-text-stroke:0.1px #1e1e1e;">Q</span>
<div class="a" style="left:1450.9px;top:248px;width:1.0px;height:22px;background:#cfcfcf;"></div>
<span class="t" style="left:1419.66px;top:253.52px;font-size:13.8px;color:#1e1e1e;transform:scaleX(0.8600);-webkit-text-stroke:0.1px #1e1e1e;">R</span>
<div class="a" style="left:1504.9px;top:248px;width:1.0px;height:22px;background:#cfcfcf;"></div>
<span class="t" style="left:1474.44px;top:253.52px;font-size:13.8px;color:#1e1e1e;transform:scaleX(0.8600);-webkit-text-stroke:0.1px #1e1e1e;">S</span>
<div class="a" style="left:1559.3px;top:248px;width:1.0px;height:22px;background:#cfcfcf;"></div>
<span class="t" style="left:1528.98px;top:253.52px;font-size:13.8px;color:#1e1e1e;transform:scaleX(0.8600);-webkit-text-stroke:0.1px #1e1e1e;">T</span>
<div class="a" style="left:1px;top:269.5px;width:1575px;height:1.0px;background:#9b9b9b;"></div>
<svg class="a" style="left:13px;top:252px;" width="18" height="17" viewBox="0 0 18 17"><path d="M15.5 2 V15.5 H2 Z" fill="#b8b8b8"/></svg>
<div class="a" style="left:31px;top:248px;width:1px;height:629px;background:#9b9b9b;"></div>
<div class="a" style="left:1px;top:270px;width:30px;height:607px;background:#f0f0f0;"></div>
<div class="a" style="left:1px;top:270px;width:30px;height:607px;overflow:hidden">
<div class="a" style="left:0;top:53.5px;width:30px;height:1px;background:#cfcfcf"></div>
<div class="a" style="left:0;top:0px;width:30px;height:54px;overflow:hidden">
<span class="t" style="left:10.45px;top:38.64px;font-size:14.6px;color:#262626">1</span></div>
<div class="a" style="left:0;top:95.5px;width:30px;height:1px;background:#cfcfcf"></div>
<div class="a" style="left:0;top:54px;width:30px;height:42px;overflow:hidden">
<span class="t" style="left:10.45px;top:26.64px;font-size:14.6px;color:#262626">2</span></div>
<div class="a" style="left:0;top:102.0px;width:30px;height:1px;background:#cfcfcf"></div>
<div class="a" style="left:0;top:96px;width:30px;height:6.5px;overflow:hidden">
<span class="t" style="left:10.45px;top:-8.86px;font-size:14.6px;color:#262626">3</span></div>
<div class="a" style="left:0;top:109.0px;width:30px;height:1px;background:#cfcfcf"></div>
<div class="a" style="left:0;top:102.5px;width:30px;height:7.0px;overflow:hidden">
<span class="t" style="left:10.45px;top:-8.36px;font-size:14.6px;color:#262626">4</span></div>
<div class="a" style="left:0;top:142.0px;width:30px;height:1px;background:#cfcfcf"></div>
<div class="a" style="left:0;top:109.5px;width:30px;height:33.0px;overflow:hidden">
<span class="t" style="left:10.45px;top:17.64px;font-size:14.6px;color:#262626">5</span></div>
<div class="a" style="left:0;top:210.0px;width:30px;height:1px;background:#cfcfcf"></div>
<div class="a" style="left:0;top:142.5px;width:30px;height:68.0px;overflow:hidden">
<span class="t" style="left:10.45px;top:52.64px;font-size:14.6px;color:#262626">6</span></div>
<div class="a" style="left:0;top:219.0px;width:30px;height:1px;background:#cfcfcf"></div>
<div class="a" style="left:0;top:210.5px;width:30px;height:9.0px;overflow:hidden">
<span class="t" style="left:10.45px;top:-6.36px;font-size:14.6px;color:#262626">7</span></div>
<div class="a" style="left:0;top:252.5px;width:30px;height:1px;background:#cfcfcf"></div>
<div class="a" style="left:0;top:219.5px;width:30px;height:33.5px;overflow:hidden">
<span class="t" style="left:10.45px;top:18.14px;font-size:14.6px;color:#262626">8</span></div>
<div class="a" style="left:0;top:320.5px;width:30px;height:1px;background:#cfcfcf"></div>
<div class="a" style="left:0;top:253px;width:30px;height:68px;overflow:hidden">
<span class="t" style="left:10.45px;top:52.64px;font-size:14.6px;color:#262626">9</span></div>
<div class="a" style="left:0;top:329.70000000000005px;width:30px;height:1px;background:#cfcfcf"></div>
<div class="a" style="left:0;top:321px;width:30px;height:9.200000000000045px;overflow:hidden">
<span class="t" style="left:6.38px;top:-6.16px;font-size:14.6px;color:#262626">10</span></div>
<div class="a" style="left:0;top:363.0px;width:30px;height:1px;background:#cfcfcf"></div>
<div class="a" style="left:0;top:330.20000000000005px;width:30px;height:33.299999999999955px;overflow:hidden">
<span class="t" style="left:6.93px;top:17.94px;font-size:14.6px;color:#262626">11</span></div>
<div class="a" style="left:0;top:430.5px;width:30px;height:1px;background:#cfcfcf"></div>
<div class="a" style="left:0;top:363.5px;width:30px;height:67.5px;overflow:hidden">
<span class="t" style="left:6.38px;top:52.14px;font-size:14.6px;color:#262626">12</span></div>
<div class="a" style="left:0;top:440.5px;width:30px;height:1px;background:#cfcfcf"></div>
<div class="a" style="left:0;top:431px;width:30px;height:10px;overflow:hidden">
<span class="t" style="left:6.38px;top:-5.36px;font-size:14.6px;color:#262626">13</span></div>
<div class="a" style="left:0;top:473.5px;width:30px;height:1px;background:#cfcfcf"></div>
<div class="a" style="left:0;top:441px;width:30px;height:33px;overflow:hidden">
<span class="t" style="left:6.38px;top:17.64px;font-size:14.6px;color:#262626">14</span></div>
<div class="a" style="left:0;top:541.8px;width:30px;height:1px;background:#cfcfcf"></div>
<div class="a" style="left:0;top:474px;width:30px;height:68.29999999999995px;overflow:hidden">
<span class="t" style="left:6.38px;top:52.94px;font-size:14.6px;color:#262626">15</span></div>
<div class="a" style="left:0;top:562.7px;width:30px;height:1px;background:#cfcfcf"></div>
<div class="a" style="left:0;top:542.3px;width:30px;height:20.90000000000009px;overflow:hidden">
<span class="t" style="left:6.38px;top:5.54px;font-size:14.6px;color:#262626">16</span></div>
<div class="a" style="left:0;top:584.0px;width:30px;height:1px;background:#cfcfcf"></div>
<div class="a" style="left:0;top:563.2px;width:30px;height:21.299999999999955px;overflow:hidden">
<span class="t" style="left:6.38px;top:5.94px;font-size:14.6px;color:#262626">17</span></div>
<div class="a" style="left:0;top:606.0px;width:30px;height:1px;background:#cfcfcf"></div>
<div class="a" style="left:0;top:584.5px;width:30px;height:22.0px;overflow:hidden">
<span class="t" style="left:6.38px;top:6.64px;font-size:14.6px;color:#262626">18</span></div>
</div>
<div class="a" style="left:32px;top:270.5px;width:1543.5px;height:606.5px;background:#ffffff;"></div>
<div class="a" style="left:1575.5px;top:247px;width:22.5px;height:630px;background:#f3f3f3;"></div>
<div class="a" style="left:1575.5px;top:270px;width:1.0px;height:607px;background:#e2e2e2;"></div>
<svg class="a" style="left:1581px;top:253px;" width="14" height="11" viewBox="0 0 14 11"><path d="M2 9.5 L7 2 L12 9.5 Z" fill="#707070" stroke="#707070" stroke-width="1.2" stroke-linejoin="round"/></svg>
<div class="a" style="left:1582.8px;top:268px;width:9.799999999999955px;height:524.3px;background:#707070;border-radius:5px;"></div>
<svg class="a" style="left:1581px;top:864px;" width="14" height="11" viewBox="0 0 14 11"><path d="M2 1.5 L7 9 L12 1.5 Z" fill="#707070" stroke="#707070" stroke-width="1.2" stroke-linejoin="round"/></svg>
<div class="a" style="left:1px;top:877px;width:1597px;height:37px;background:#f3f3f3;"></div>
<div class="a" style="left:1px;top:876.5px;width:1575px;height:1.0px;background:#e6e6e6;"></div>
<svg class="a" style="left:15px;top:888px;" width="10" height="16" viewBox="0 0 10 16"><g fill="#333"><circle cx="4.5" cy="2.8" r="1.5"/><circle cx="4.5" cy="8" r="1.5"/><circle cx="4.5" cy="13.2" r="1.5"/></g></svg>
<svg class="a" style="left:41px;top:889px;" width="13" height="13" viewBox="0 0 13 13"><path d="M10.5 2 V11 L2.5 6.5 Z" fill="#707070" stroke="#707070" stroke-width="1" stroke-linejoin="round"/></svg>
<div class="a" style="left:57px;top:890px;width:932.7px;height:10.299999999999955px;background:#707070;border-radius:5.2px;"></div>
<svg class="a" style="left:1559px;top:889px;" width="13" height="13" viewBox="0 0 13 13"><path d="M2.5 2 V11 L10.5 6.5 Z" fill="#707070" stroke="#707070" stroke-width="1" stroke-linejoin="round"/></svg>
<div class="a" style="left:1px;top:914px;width:1597px;height:25px;background:#f3f3f3;"></div>
<div class="a" style="left:1px;top:914px;width:1597px;height:1px;background:#cfcfcf;"></div>
<span class="t" style="left:15.00px;top:920.60px;font-size:13px;color:#4a4a4a;transform:scaleX(0.9134);">Pronto</span>
<svg class="a" style="left:72px;top:917px;" width="22" height="20" viewBox="0 0 22 20"><g fill="none" stroke="#444" stroke-width="1.3"><rect x="2.5" y="2.5" width="15.5" height="15"/><line x1="2.5" y1="5.5" x2="18" y2="5.5"/><line x1="5" y1="9" x2="8" y2="9"/><line x1="5" y1="12" x2="8" y2="12"/><line x1="5" y1="15" x2="8" y2="15"/><circle cx="13.5" cy="13" r="4.3" fill="#f0f0f0"/></g><circle cx="13.5" cy="13" r="2" fill="#444"/></svg>
<svg class="a" style="left:108px;top:916px;" width="22" height="22" viewBox="0 0 22 22"><g fill="none" stroke="#333" stroke-width="1.2" stroke-linejoin="round"><circle cx="10" cy="3.6" r="2.1"/><path d="M3.5 7.5 C4 6.2,6 6.8,10 6.8 C14 6.8,16 6.2,16.5 7.5 C17 8.8,15.5 9.3,12.8 9.6 L12.5 13 M7.2 9.6 C4.5 9.3,3 8.8,3.5 7.5 M7.2 9.6 L7.5 14 L5.5 19.5 C5 21,7 21.3,7.5 20 L10 15 L11 17"/></g><path d="M13.5 14.5 L20 21 M20 14.5 L13.5 21" stroke="#333" stroke-width="1.3"/></svg>
<span class="t" style="left:131.40px;top:920.60px;font-size:13px;color:#262626;font-weight:bold;transform:scaleX(0.9016);">Acessibilidade: investigar</span>
<div class="a" style="left:1249px;top:915px;width:45.700000000000045px;height:24px;background:#dedede;"></div>
<svg class="a" style="left:1261px;top:917px;" width="20" height="19" viewBox="0 0 20 19"><g fill="none" stroke="#333" stroke-width="1.5"><rect x="2.5" y="2.5" width="15" height="14.7"/><line x1="7.5" y1="2.5" x2="7.5" y2="17.2"/><line x1="12.5" y1="2.5" x2="12.5" y2="17.2"/><line x1="2.5" y1="7.4" x2="17.5" y2="7.4"/><line x1="2.5" y1="12.3" x2="17.5" y2="12.3"/></g></svg>
<svg class="a" style="left:1308px;top:917px;" width="20" height="19" viewBox="0 0 20 19"><g fill="none" stroke="#333" stroke-width="1.3"><rect x="1.8" y="2.5" width="16" height="14.7"/><rect x="5.5" y="5" width="8.5" height="9.7"/><line x1="7.5" y1="7.5" x2="12" y2="7.5"/><line x1="7.5" y1="10" x2="12" y2="10"/><line x1="7.5" y1="12.4" x2="12" y2="12.4"/></g></svg>
<svg class="a" style="left:1354px;top:917px;" width="20" height="19" viewBox="0 0 20 19"><g fill="none" stroke="#333" stroke-width="1.4"><rect x="1.8" y="2.5" width="16" height="14.7"/><path d="M6 2.5 V9 H10.5 V2.5"/></g></svg>
<div class="a" style="left:1393.7px;top:926.5px;width:8.299999999999955px;height:1.1000000000000227px;background:#444;"></div>
<div class="a" style="left:1408.3px;top:926.7px;width:114.70000000000005px;height:0.7999999999999545px;background:#8a8a8a;"></div>
<div class="a" style="left:1457px;top:920.8px;width:5.7999999999999545px;height:12.300000000000068px;background:#555;border-radius:1px;"></div>
<div class="a" style="left:1465px;top:923px;width:1px;height:8px;background:#777;"></div>
<svg class="a" style="left:1527px;top:918px;" width="12" height="16" viewBox="0 0 12 16"><g stroke="#444" stroke-width="1.2"><line x1="1.8" y1="8.5" x2="10.3" y2="8.5"/><line x1="6" y1="4.3" x2="6" y2="12.8"/></g></svg>
<span class="t" style="left:1553.20px;top:921.62px;font-size:12.5px;color:#333;transform:scaleX(0.8629);">90%</span>
<div class="a" style="left:0px;top:0px;width:1px;height:940px;background:#6d6d6d;"></div>
<div class="a" style="left:1598px;top:0px;width:1px;height:940px;background:#e8e8e8;"></div>
<div class="a" style="left:1599px;top:0px;width:1px;height:940px;background:#7a7a7a;"></div>
<div class="a" style="left:1598px;top:0px;width:2px;height:56px;background:#4f9468;"></div>
<div class="a" style="left:0px;top:939px;width:1600px;height:1px;background:#5d5d5d;"></div>
<div class="a" style="left:32px;top:270.5px;width:1543.5px;height:53.5px;background:#e6e6e6;"></div>
<div class="a" style="left:32px;top:324px;width:1543.5px;height:42px;background:#414141;"></div>
<div class="a" style="left:392.5px;top:270.5px;width:120.79999999999995px;height:53.5px;background:#414141;"></div>
<div class="a" style="left:152px;top:334px;width:135px;height:32px;background:#ffffff;"></div>
<span class="t" style="left:189.75px;top:291.62px;font-size:13.8px;color:#141414;font-weight:bold;transform:scaleX(0.8771);">CADASTRO</span>
<span class="t" style="left:302.30px;top:282.62px;font-size:13.8px;color:#141414;font-weight:bold;transform:scaleX(0.8719);">CONTROLE</span>
<span class="t" style="left:296.60px;top:301.02px;font-size:13.8px;color:#141414;font-weight:bold;transform:scaleX(0.8955);">HOSPITALAR</span>
<span class="t" style="left:408.30px;top:283.12px;font-size:13.8px;color:#ffffff;font-weight:bold;transform:scaleX(0.9079);">INDICADORES</span>
<span class="t" style="left:405.50px;top:301.52px;font-size:13.8px;color:#ffffff;font-weight:bold;transform:scaleX(0.8768);">HOSPITALARES</span>
<span class="t" style="left:531.00px;top:292.32px;font-size:13.8px;color:#141414;font-weight:bold;transform:scaleX(0.8974);">DASHBOARD</span>
<span class="t" style="left:646.40px;top:292.32px;font-size:13.8px;color:#141414;font-weight:bold;transform:scaleX(0.8785);">INSTRUÇÕES</span>
<span class="t" style="left:185.30px;top:345.02px;font-size:13.8px;color:#404040;font-weight:bold;transform:scaleX(0.8696);">PACIENTES</span>
<span class="t" style="left:343.50px;top:344.52px;font-size:13.8px;color:#ffffff;font-weight:bold;transform:scaleX(0.9213);">NUTRIÇÃO</span>
<span class="t" style="left:514.40px;top:344.82px;font-size:13.8px;color:#ffffff;font-weight:bold;transform:scaleX(0.9375);">LAVANDERIA</span>
<span class="t" style="left:681.30px;top:344.82px;font-size:13.8px;color:#ffffff;font-weight:bold;transform:scaleX(0.9432);">MEDICAMENTOS</span>
<svg class="a" style="left:0px;top:0px;left:0;top:0;pointer-events:none" width="1600" height="940" viewBox="0 0 1600 940"><defs><clipPath id="cL1"><polygon points="82.83,324.48 71.68,335.63 55.92,335.63 44.77,324.48 44.77,308.72 55.92,297.57 71.68,297.57 82.83,308.72"/></clipPath><clipPath id="cL2"><polygon points="144.33,322.28 133.18,333.43 117.42,333.43 106.27,322.28 106.27,306.52 117.42,295.37 133.18,295.37 144.33,306.52"/></clipPath></defs>
<polygon points="82.83,324.48 71.68,335.63 55.92,335.63 44.77,324.48 44.77,308.72 55.92,297.57 71.68,297.57 82.83,308.72" fill="#c5eeb3"/><polygon points="144.33,322.28 133.18,333.43 117.42,333.43 106.27,322.28 106.27,306.52 117.42,295.37 133.18,295.37 144.33,306.52" fill="#c5eeb3"/>
<polygon points="112.49,326.81 101.01,338.29 84.79,338.29 73.31,326.81 73.31,310.59 84.79,299.11 101.01,299.11 112.49,310.59" fill="#747474"/>
<g clip-path="url(#cL1)"><polygon points="112.49,326.81 101.01,338.29 84.79,338.29 73.31,326.81 73.31,310.59 84.79,299.11 101.01,299.11 112.49,310.59" fill="#82a06f"/></g><g clip-path="url(#cL2)"><polygon points="112.49,326.81 101.01,338.29 84.79,338.29 73.31,326.81 73.31,310.59 84.79,299.11 101.01,299.11 112.49,310.59" fill="#82a06f"/></g>
<polygon points="93.53,304.18 82.38,315.33 66.62,315.33 55.47,304.18 55.47,288.42 66.62,277.27 82.38,277.27 93.53,288.42" fill="#00c153"/><polygon points="132.13,344.68 120.98,355.83 105.22,355.83 94.07,344.68 94.07,328.92 105.22,317.77 120.98,317.77 132.13,328.92" fill="#00c153"/>
<g clip-path="url(#cL1)"><polygon points="93.53,304.18 82.38,315.33 66.62,315.33 55.47,304.18 55.47,288.42 66.62,277.27 82.38,277.27 93.53,288.42" fill="#3cc85d"/><polygon points="132.13,344.68 120.98,355.83 105.22,355.83 94.07,344.68 94.07,328.92 105.22,317.77 120.98,317.77 132.13,328.92" fill="#3cc85d"/></g>
<g clip-path="url(#cL2)"><polygon points="93.53,304.18 82.38,315.33 66.62,315.33 55.47,304.18 55.47,288.42 66.62,277.27 82.38,277.27 93.53,288.42" fill="#3cc85d"/><polygon points="132.13,344.68 120.98,355.83 105.22,355.83 94.07,344.68 94.07,328.92 105.22,317.77 120.98,317.77 132.13,328.92" fill="#3cc85d"/></g></svg>
<span class="t" style="left:34.2px;top:366.4px;font-size:15.2px;font-weight:bold;color:#000;letter-spacing:0.9px;-webkit-text-stroke:1.1px #000;transform:scaleX(0.995)">SHEETS TECH</span>
<span class="t" style="left:70.40px;top:386.79px;font-size:18.2px;color:#3f3f3f;font-weight:bold;transform:scaleX(0.9188);">Média de Pacientes Por Dia</span>
<div class="a" style="left:66.4px;top:412px;width:297.20000000000005px;height:68.39999999999998px;background:#f2f2f2;border:1px solid #d9d9d9;"></div>
<span class="t" style="left:194.40px;top:428.32px;font-size:40.5px;color:#3a3a3a;font-weight:bold;transform:scaleX(0.9322);">37</span>
<span class="t" style="left:70.40px;top:496.79px;font-size:18.2px;color:#3f3f3f;font-weight:bold;transform:scaleX(0.9215);">Taxa de Permanência (em dias)</span>
<div class="a" style="left:66.4px;top:523px;width:297.20000000000005px;height:68.60000000000002px;background:#f2f2f2;border:1px solid #d9d9d9;"></div>
<span class="t" style="left:177.60px;top:538.32px;font-size:40.5px;color:#3a3a3a;font-weight:bold;transform:scaleX(0.9484);">2,74</span>
<span class="t" style="left:70.40px;top:607.59px;font-size:18.2px;color:#3f3f3f;font-weight:bold;transform:scaleX(0.9167);">Taxa de Ocupação (por leito por dia)</span>
<div class="a" style="left:66.4px;top:633.6px;width:297.20000000000005px;height:68.0px;background:#f2f2f2;border:1px solid #d9d9d9;"></div>
<span class="t" style="left:177.60px;top:648.72px;font-size:40.5px;color:#3a3a3a;font-weight:bold;transform:scaleX(0.9433);">3,73</span>
<span class="t" style="left:70.40px;top:718.19px;font-size:18.2px;color:#3f3f3f;font-weight:bold;transform:scaleX(0.9265);">Taxa de Mortalidade Hospitalar</span>
<div class="a" style="left:66.4px;top:744px;width:297.20000000000005px;height:68px;background:#f2f2f2;border:1px solid #d9d9d9;"></div>
<span class="t" style="left:163.00px;top:759.32px;font-size:40.5px;color:#3a3a3a;font-weight:bold;transform:scaleX(0.9232);">1,66%</span>
<span class="t" style="left:385.80px;top:387.89px;font-size:18.2px;color:#3f3f3f;font-weight:bold;transform:scaleX(0.8621);">Admissão</span>
<span class="t" style="left:386.00px;top:608.94px;font-size:18.2px;color:#3f3f3f;font-weight:bold;transform:scaleX(0.8902);">Ocupação Inicial x Total Saídas</span>
<span class="t" style="left:1124.20px;top:387.69px;font-size:18.2px;color:#3f3f3f;font-weight:bold;transform:scaleX(0.9230);">Atendimentos</span>
<div class="a" style="left:386.4px;top:414.3px;width:725.3000000000001px;height:176.90000000000003px;background:#fff;border:1px solid #d9d9d9;"></div>
<div class="a" style="left:400.9px;top:429.7px;width:694.3000000000001px;height:129.00000000000006px;background:#f2f2f2;"></div>
<svg class="a" style="left:400.9px;top:429.7px;" width="694.3000000000001" height="129.00000000000006" viewBox="0 0 694.3000000000001 129.00000000000006"><rect x="2.60" y="58.05" width="17.2" height="70.95" fill="#ffc000"/><rect x="25.00" y="90.30" width="17.2" height="38.70" fill="#ffc000"/><rect x="47.39" y="99.98" width="17.2" height="29.03" fill="#ffc000"/><rect x="69.79" y="87.07" width="17.2" height="41.93" fill="#ffc000"/><rect x="92.19" y="54.82" width="17.2" height="74.18" fill="#ffc000"/><rect x="114.58" y="90.30" width="17.2" height="38.70" fill="#ffc000"/><rect x="136.98" y="90.30" width="17.2" height="38.70" fill="#ffc000"/><rect x="159.38" y="103.20" width="17.2" height="25.80" fill="#ffc000"/><rect x="181.77" y="99.98" width="17.2" height="29.03" fill="#ffc000"/><rect x="204.17" y="99.98" width="17.2" height="29.03" fill="#ffc000"/><rect x="226.57" y="58.05" width="17.2" height="70.95" fill="#ffc000"/><rect x="248.96" y="25.80" width="17.2" height="103.20" fill="#ffc000"/><rect x="271.36" y="119.33" width="17.2" height="9.68" fill="#ffc000"/><rect x="293.76" y="90.30" width="17.2" height="38.70" fill="#ffc000"/><rect x="316.15" y="80.63" width="17.2" height="48.38" fill="#ffc000"/><rect x="338.55" y="109.65" width="17.2" height="19.35" fill="#ffc000"/><rect x="360.95" y="90.30" width="17.2" height="38.70" fill="#ffc000"/><rect x="383.34" y="70.95" width="17.2" height="58.05" fill="#ffc000"/><rect x="405.74" y="67.73" width="17.2" height="61.28" fill="#ffc000"/><rect x="428.14" y="112.88" width="17.2" height="16.13" fill="#ffc000"/><rect x="450.53" y="112.88" width="17.2" height="16.13" fill="#ffc000"/><rect x="472.93" y="93.53" width="17.2" height="35.48" fill="#ffc000"/><rect x="495.33" y="90.30" width="17.2" height="38.70" fill="#ffc000"/><rect x="517.72" y="109.65" width="17.2" height="19.35" fill="#ffc000"/><rect x="540.12" y="99.98" width="17.2" height="29.03" fill="#ffc000"/><rect x="562.52" y="64.50" width="17.2" height="64.50" fill="#ffc000"/><rect x="584.91" y="70.95" width="17.2" height="58.05" fill="#ffc000"/><rect x="607.31" y="122.55" width="17.2" height="6.45" fill="#ffc000"/><rect x="629.71" y="90.30" width="17.2" height="38.70" fill="#ffc000"/><rect x="652.10" y="70.95" width="17.2" height="58.05" fill="#ffc000"/><rect x="674.50" y="80.63" width="17.2" height="48.38" fill="#ffc000"/></svg>
<div class="a" style="left:400.9px;top:558.2px;width:694.3000000000001px;height:1.0px;background:#e4e4e4;"></div>
<span class="t" style="left:406.16px;top:469.73px;font-size:11.6px;color:#404040;transform:scaleX(0.9200);">22</span>
<span class="t" style="left:408.93px;top:569.40px;font-size:12.4px;color:#595959;transform:scaleX(0.9200);">1</span>
<span class="t" style="left:428.56px;top:501.98px;font-size:11.6px;color:#404040;transform:scaleX(0.9200);">12</span>
<span class="t" style="left:431.33px;top:569.40px;font-size:12.4px;color:#595959;transform:scaleX(0.9200);">2</span>
<span class="t" style="left:453.93px;top:511.66px;font-size:11.6px;color:#404040;transform:scaleX(0.9200);">9</span>
<span class="t" style="left:453.73px;top:569.40px;font-size:12.4px;color:#595959;transform:scaleX(0.9200);">3</span>
<span class="t" style="left:473.35px;top:498.76px;font-size:11.6px;color:#404040;transform:scaleX(0.9200);">13</span>
<span class="t" style="left:476.12px;top:569.40px;font-size:12.4px;color:#595959;transform:scaleX(0.9200);">4</span>
<span class="t" style="left:495.75px;top:466.51px;font-size:11.6px;color:#404040;transform:scaleX(0.9200);">23</span>
<span class="t" style="left:498.52px;top:569.40px;font-size:12.4px;color:#595959;transform:scaleX(0.9200);">5</span>
<span class="t" style="left:518.15px;top:501.98px;font-size:11.6px;color:#404040;transform:scaleX(0.9200);">12</span>
<span class="t" style="left:520.92px;top:569.40px;font-size:12.4px;color:#595959;transform:scaleX(0.9200);">6</span>
<span class="t" style="left:540.54px;top:501.98px;font-size:11.6px;color:#404040;transform:scaleX(0.9200);">12</span>
<span class="t" style="left:543.31px;top:569.40px;font-size:12.4px;color:#595959;transform:scaleX(0.9200);">7</span>
<span class="t" style="left:565.91px;top:514.88px;font-size:11.6px;color:#404040;transform:scaleX(0.9200);">8</span>
<span class="t" style="left:565.71px;top:569.40px;font-size:12.4px;color:#595959;transform:scaleX(0.9200);">8</span>
<span class="t" style="left:588.31px;top:511.66px;font-size:11.6px;color:#404040;transform:scaleX(0.9200);">9</span>
<span class="t" style="left:588.11px;top:569.40px;font-size:12.4px;color:#595959;transform:scaleX(0.9200);">9</span>
<span class="t" style="left:610.71px;top:511.66px;font-size:11.6px;color:#404040;transform:scaleX(0.9200);">9</span>
<span class="t" style="left:607.32px;top:569.40px;font-size:12.4px;color:#595959;transform:scaleX(0.9200);">10</span>
<span class="t" style="left:630.13px;top:469.73px;font-size:11.6px;color:#404040;transform:scaleX(0.9200);">22</span>
<span class="t" style="left:630.15px;top:569.40px;font-size:12.4px;color:#595959;transform:scaleX(0.9200);">11</span>
<span class="t" style="left:652.53px;top:437.48px;font-size:11.6px;color:#404040;transform:scaleX(0.9200);">32</span>
<span class="t" style="left:652.12px;top:569.40px;font-size:12.4px;color:#595959;transform:scaleX(0.9200);">12</span>
<span class="t" style="left:677.90px;top:531.01px;font-size:11.6px;color:#404040;transform:scaleX(0.9200);">3</span>
<span class="t" style="left:674.51px;top:569.40px;font-size:12.4px;color:#595959;transform:scaleX(0.9200);">13</span>
<span class="t" style="left:697.32px;top:501.98px;font-size:11.6px;color:#404040;transform:scaleX(0.9200);">12</span>
<span class="t" style="left:696.91px;top:569.40px;font-size:12.4px;color:#595959;transform:scaleX(0.9200);">14</span>
<span class="t" style="left:719.72px;top:492.31px;font-size:11.6px;color:#404040;transform:scaleX(0.9200);">15</span>
<span class="t" style="left:719.31px;top:569.40px;font-size:12.4px;color:#595959;transform:scaleX(0.9200);">15</span>
<span class="t" style="left:745.09px;top:521.33px;font-size:11.6px;color:#404040;transform:scaleX(0.9200);">6</span>
<span class="t" style="left:741.70px;top:569.40px;font-size:12.4px;color:#595959;transform:scaleX(0.9200);">16</span>
<span class="t" style="left:764.51px;top:501.98px;font-size:11.6px;color:#404040;transform:scaleX(0.9200);">12</span>
<span class="t" style="left:764.10px;top:569.40px;font-size:12.4px;color:#595959;transform:scaleX(0.9200);">17</span>
<span class="t" style="left:786.91px;top:482.63px;font-size:11.6px;color:#404040;transform:scaleX(0.9200);">18</span>
<span class="t" style="left:786.50px;top:569.40px;font-size:12.4px;color:#595959;transform:scaleX(0.9200);">18</span>
<span class="t" style="left:809.30px;top:479.41px;font-size:11.6px;color:#404040;transform:scaleX(0.9200);">19</span>
<span class="t" style="left:808.89px;top:569.40px;font-size:12.4px;color:#595959;transform:scaleX(0.9200);">19</span>
<span class="t" style="left:834.68px;top:524.56px;font-size:11.6px;color:#404040;transform:scaleX(0.9200);">5</span>
<span class="t" style="left:831.29px;top:569.40px;font-size:12.4px;color:#595959;transform:scaleX(0.9200);">20</span>
<span class="t" style="left:857.07px;top:524.56px;font-size:11.6px;color:#404040;transform:scaleX(0.9200);">5</span>
<span class="t" style="left:853.69px;top:569.40px;font-size:12.4px;color:#595959;transform:scaleX(0.9200);">21</span>
<span class="t" style="left:876.89px;top:505.21px;font-size:11.6px;color:#404040;transform:scaleX(0.9200);">11</span>
<span class="t" style="left:876.08px;top:569.40px;font-size:12.4px;color:#595959;transform:scaleX(0.9200);">22</span>
<span class="t" style="left:898.89px;top:501.98px;font-size:11.6px;color:#404040;transform:scaleX(0.9200);">12</span>
<span class="t" style="left:898.48px;top:569.40px;font-size:12.4px;color:#595959;transform:scaleX(0.9200);">23</span>
<span class="t" style="left:924.26px;top:521.33px;font-size:11.6px;color:#404040;transform:scaleX(0.9200);">6</span>
<span class="t" style="left:920.88px;top:569.40px;font-size:12.4px;color:#595959;transform:scaleX(0.9200);">24</span>
<span class="t" style="left:946.66px;top:511.66px;font-size:11.6px;color:#404040;transform:scaleX(0.9200);">9</span>
<span class="t" style="left:943.28px;top:569.40px;font-size:12.4px;color:#595959;transform:scaleX(0.9200);">25</span>
<span class="t" style="left:966.08px;top:476.18px;font-size:11.6px;color:#404040;transform:scaleX(0.9200);">20</span>
<span class="t" style="left:965.67px;top:569.40px;font-size:12.4px;color:#595959;transform:scaleX(0.9200);">26</span>
<span class="t" style="left:988.48px;top:482.63px;font-size:11.6px;color:#404040;transform:scaleX(0.9200);">18</span>
<span class="t" style="left:988.07px;top:569.40px;font-size:12.4px;color:#595959;transform:scaleX(0.9200);">27</span>
<span class="t" style="left:1013.85px;top:534.23px;font-size:11.6px;color:#404040;transform:scaleX(0.9200);">2</span>
<span class="t" style="left:1010.47px;top:569.40px;font-size:12.4px;color:#595959;transform:scaleX(0.9200);">28</span>
<span class="t" style="left:1033.27px;top:501.98px;font-size:11.6px;color:#404040;transform:scaleX(0.9200);">12</span>
<span class="t" style="left:1032.86px;top:569.40px;font-size:12.4px;color:#595959;transform:scaleX(0.9200);">29</span>
<span class="t" style="left:1055.67px;top:482.63px;font-size:11.6px;color:#404040;transform:scaleX(0.9200);">18</span>
<span class="t" style="left:1055.26px;top:569.40px;font-size:12.4px;color:#595959;transform:scaleX(0.9200);">30</span>
<span class="t" style="left:1078.07px;top:492.31px;font-size:11.6px;color:#404040;transform:scaleX(0.9200);">15</span>
<span class="t" style="left:1077.66px;top:569.40px;font-size:12.4px;color:#595959;transform:scaleX(0.9200);">31</span>
<div class="a" style="left:386.4px;top:635.2px;width:725.3000000000001px;height:176.89999999999998px;background:#fff;border:1px solid #d9d9d9;"></div>
<div class="a" style="left:401.4px;top:649.9px;width:694.1999999999999px;height:97.39999999999998px;background:#f2f2f2;"></div>
<svg class="a" style="left:401.4px;top:649.9px;" width="694.1999999999999" height="97.39999999999998" viewBox="0 0 694.1999999999999 97.39999999999998"><rect x="2.60" y="32.14" width="17.2" height="65.26" fill="#00b050"/><rect x="24.99" y="36.04" width="17.2" height="61.36" fill="#00b050"/><rect x="47.38" y="38.96" width="17.2" height="58.44" fill="#00b050"/><rect x="69.78" y="33.12" width="17.2" height="64.28" fill="#00b050"/><rect x="92.17" y="22.40" width="17.2" height="75.00" fill="#00b050"/><rect x="114.56" y="35.06" width="17.2" height="62.34" fill="#00b050"/><rect x="136.96" y="41.88" width="17.2" height="55.52" fill="#00b050"/><rect x="159.35" y="38.96" width="17.2" height="58.44" fill="#00b050"/><rect x="181.75" y="41.88" width="17.2" height="55.52" fill="#00b050"/><rect x="204.14" y="42.86" width="17.2" height="54.54" fill="#00b050"/><rect x="226.53" y="29.22" width="17.2" height="68.18" fill="#00b050"/><rect x="248.93" y="30.19" width="17.2" height="67.21" fill="#00b050"/><rect x="271.32" y="56.49" width="17.2" height="40.91" fill="#00b050"/><rect x="293.71" y="52.60" width="17.2" height="44.80" fill="#00b050"/><rect x="316.11" y="47.73" width="17.2" height="49.67" fill="#00b050"/><rect x="338.50" y="53.57" width="17.2" height="43.83" fill="#00b050"/><rect x="360.89" y="48.70" width="17.2" height="48.70" fill="#00b050"/><rect x="383.29" y="43.83" width="17.2" height="53.57" fill="#00b050"/><rect x="405.68" y="46.75" width="17.2" height="50.65" fill="#00b050"/><rect x="428.07" y="61.36" width="17.2" height="36.04" fill="#00b050"/><rect x="450.47" y="64.28" width="17.2" height="33.12" fill="#00b050"/><rect x="472.86" y="59.41" width="17.2" height="37.99" fill="#00b050"/><rect x="495.25" y="59.41" width="17.2" height="37.99" fill="#00b050"/><rect x="517.65" y="58.44" width="17.2" height="38.96" fill="#00b050"/><rect x="540.04" y="62.34" width="17.2" height="35.06" fill="#00b050"/><rect x="562.44" y="50.65" width="17.2" height="46.75" fill="#00b050"/><rect x="584.83" y="50.65" width="17.2" height="46.75" fill="#00b050"/><rect x="607.22" y="66.23" width="17.2" height="31.17" fill="#00b050"/><rect x="629.62" y="61.36" width="17.2" height="36.04" fill="#00b050"/><rect x="652.01" y="56.49" width="17.2" height="40.91" fill="#00b050"/><rect x="674.40" y="61.36" width="17.2" height="36.04" fill="#00b050"/><path d="M11.20 82.79 C14.93 83.44 26.13 85.39 33.59 86.69 C41.05 87.98 48.52 90.58 55.98 90.58 C63.45 90.58 70.91 89.45 78.38 86.69 C85.84 83.93 93.31 75.16 100.77 74.02 C108.24 72.89 115.70 76.62 123.16 79.87 C130.63 83.11 138.09 92.37 145.56 93.50 C153.02 94.64 160.49 87.66 167.95 86.69 C175.42 85.71 182.88 86.85 190.35 87.66 C197.81 88.47 205.27 95.45 212.74 91.56 C220.20 87.66 227.67 67.69 235.13 64.28 C242.60 60.88 250.06 66.56 257.53 71.10 C264.99 75.65 272.45 88.80 279.92 91.56 C287.38 94.32 294.85 88.47 302.31 87.66 C309.78 86.85 317.24 86.20 324.71 86.69 C332.17 87.17 339.64 91.23 347.10 90.58 C354.56 89.93 362.03 85.22 369.49 82.79 C376.96 80.35 384.42 76.46 391.89 75.97 C399.35 75.48 406.82 77.43 414.28 79.87 C421.75 82.30 429.21 88.47 436.67 90.58 C444.14 92.69 451.60 93.18 459.07 92.53 C466.53 91.88 474.00 86.69 481.46 86.69 C488.93 86.69 496.39 92.69 503.85 92.53 C511.32 92.37 518.78 86.04 526.25 85.71 C533.71 85.39 541.18 91.56 548.64 90.58 C556.11 89.61 563.57 81.49 571.04 79.87 C578.50 78.24 585.96 78.89 593.43 80.84 C600.89 82.79 608.36 91.07 615.82 91.56 C623.29 92.04 630.75 85.87 638.22 83.76 C645.68 81.65 653.15 78.41 660.61 78.89 C668.07 79.38 679.27 85.39 683.00 86.69" fill="none" stroke="#2e2e2e" stroke-width="1.85" stroke-linecap="round"/></svg>
<div class="a" style="left:401.4px;top:746.8px;width:694.1999999999999px;height:1.0px;background:#e4e4e4;"></div>
<span class="t" style="left:406.46px;top:663.68px;font-size:12px;color:#262626;transform:scaleX(0.9200);">67</span>
<span class="t" style="left:409.43px;top:757.60px;font-size:12.4px;color:#595959;transform:scaleX(0.9200);">1</span>
<span class="t" style="left:428.85px;top:667.58px;font-size:12px;color:#262626;transform:scaleX(0.9200);">63</span>
<span class="t" style="left:431.82px;top:757.60px;font-size:12.4px;color:#595959;transform:scaleX(0.9200);">2</span>
<span class="t" style="left:451.24px;top:670.50px;font-size:12px;color:#262626;transform:scaleX(0.9200);">60</span>
<span class="t" style="left:454.22px;top:757.60px;font-size:12.4px;color:#595959;transform:scaleX(0.9200);">3</span>
<span class="t" style="left:473.64px;top:664.66px;font-size:12px;color:#262626;transform:scaleX(0.9200);">66</span>
<span class="t" style="left:476.61px;top:757.60px;font-size:12.4px;color:#595959;transform:scaleX(0.9200);">4</span>
<span class="t" style="left:496.03px;top:653.94px;font-size:12px;color:#262626;transform:scaleX(0.9200);">77</span>
<span class="t" style="left:499.01px;top:757.60px;font-size:12.4px;color:#595959;transform:scaleX(0.9200);">5</span>
<span class="t" style="left:518.42px;top:666.61px;font-size:12px;color:#262626;transform:scaleX(0.9200);">64</span>
<span class="t" style="left:521.40px;top:757.60px;font-size:12.4px;color:#595959;transform:scaleX(0.9200);">6</span>
<span class="t" style="left:540.82px;top:673.42px;font-size:12px;color:#262626;transform:scaleX(0.9200);">57</span>
<span class="t" style="left:543.79px;top:757.60px;font-size:12.4px;color:#595959;transform:scaleX(0.9200);">7</span>
<span class="t" style="left:563.21px;top:670.50px;font-size:12px;color:#262626;transform:scaleX(0.9200);">60</span>
<span class="t" style="left:566.19px;top:757.60px;font-size:12.4px;color:#595959;transform:scaleX(0.9200);">8</span>
<span class="t" style="left:585.60px;top:673.42px;font-size:12px;color:#262626;transform:scaleX(0.9200);">57</span>
<span class="t" style="left:588.58px;top:757.60px;font-size:12.4px;color:#595959;transform:scaleX(0.9200);">9</span>
<span class="t" style="left:608.00px;top:674.40px;font-size:12px;color:#262626;transform:scaleX(0.9200);">56</span>
<span class="t" style="left:607.79px;top:757.60px;font-size:12.4px;color:#595959;transform:scaleX(0.9200);">10</span>
<span class="t" style="left:630.39px;top:660.76px;font-size:12px;color:#262626;transform:scaleX(0.9200);">70</span>
<span class="t" style="left:630.61px;top:757.60px;font-size:12.4px;color:#595959;transform:scaleX(0.9200);">11</span>
<span class="t" style="left:652.78px;top:661.74px;font-size:12px;color:#262626;transform:scaleX(0.9200);">69</span>
<span class="t" style="left:652.58px;top:757.60px;font-size:12.4px;color:#595959;transform:scaleX(0.9200);">12</span>
<span class="t" style="left:675.18px;top:688.03px;font-size:12px;color:#262626;transform:scaleX(0.9200);">42</span>
<span class="t" style="left:674.97px;top:757.60px;font-size:12.4px;color:#595959;transform:scaleX(0.9200);">13</span>
<span class="t" style="left:697.57px;top:684.14px;font-size:12px;color:#262626;transform:scaleX(0.9200);">46</span>
<span class="t" style="left:697.37px;top:757.60px;font-size:12.4px;color:#595959;transform:scaleX(0.9200);">14</span>
<span class="t" style="left:719.97px;top:679.27px;font-size:12px;color:#262626;transform:scaleX(0.9200);">51</span>
<span class="t" style="left:719.76px;top:757.60px;font-size:12.4px;color:#595959;transform:scaleX(0.9200);">15</span>
<span class="t" style="left:742.36px;top:685.11px;font-size:12px;color:#262626;transform:scaleX(0.9200);">45</span>
<span class="t" style="left:742.15px;top:757.60px;font-size:12.4px;color:#595959;transform:scaleX(0.9200);">16</span>
<span class="t" style="left:764.75px;top:680.24px;font-size:12px;color:#262626;transform:scaleX(0.9200);">50</span>
<span class="t" style="left:764.55px;top:757.60px;font-size:12.4px;color:#595959;transform:scaleX(0.9200);">17</span>
<span class="t" style="left:787.15px;top:675.37px;font-size:12px;color:#262626;transform:scaleX(0.9200);">55</span>
<span class="t" style="left:786.94px;top:757.60px;font-size:12.4px;color:#595959;transform:scaleX(0.9200);">18</span>
<span class="t" style="left:809.54px;top:678.29px;font-size:12px;color:#262626;transform:scaleX(0.9200);">52</span>
<span class="t" style="left:809.33px;top:757.60px;font-size:12.4px;color:#595959;transform:scaleX(0.9200);">19</span>
<span class="t" style="left:831.93px;top:692.90px;font-size:12px;color:#262626;transform:scaleX(0.9200);">37</span>
<span class="t" style="left:831.73px;top:757.60px;font-size:12.4px;color:#595959;transform:scaleX(0.9200);">20</span>
<span class="t" style="left:854.33px;top:695.83px;font-size:12px;color:#262626;transform:scaleX(0.9200);">34</span>
<span class="t" style="left:854.12px;top:757.60px;font-size:12.4px;color:#595959;transform:scaleX(0.9200);">21</span>
<span class="t" style="left:876.72px;top:690.96px;font-size:12px;color:#262626;transform:scaleX(0.9200);">39</span>
<span class="t" style="left:876.52px;top:757.60px;font-size:12.4px;color:#595959;transform:scaleX(0.9200);">22</span>
<span class="t" style="left:899.11px;top:690.96px;font-size:12px;color:#262626;transform:scaleX(0.9200);">39</span>
<span class="t" style="left:898.91px;top:757.60px;font-size:12.4px;color:#595959;transform:scaleX(0.9200);">23</span>
<span class="t" style="left:921.51px;top:689.98px;font-size:12px;color:#262626;transform:scaleX(0.9200);">40</span>
<span class="t" style="left:921.30px;top:757.60px;font-size:12.4px;color:#595959;transform:scaleX(0.9200);">24</span>
<span class="t" style="left:943.90px;top:693.88px;font-size:12px;color:#262626;transform:scaleX(0.9200);">36</span>
<span class="t" style="left:943.70px;top:757.60px;font-size:12.4px;color:#595959;transform:scaleX(0.9200);">25</span>
<span class="t" style="left:966.29px;top:682.19px;font-size:12px;color:#262626;transform:scaleX(0.9200);">48</span>
<span class="t" style="left:966.09px;top:757.60px;font-size:12.4px;color:#595959;transform:scaleX(0.9200);">26</span>
<span class="t" style="left:988.69px;top:682.19px;font-size:12px;color:#262626;transform:scaleX(0.9200);">48</span>
<span class="t" style="left:988.48px;top:757.60px;font-size:12.4px;color:#595959;transform:scaleX(0.9200);">27</span>
<span class="t" style="left:1011.08px;top:697.77px;font-size:12px;color:#262626;transform:scaleX(0.9200);">32</span>
<span class="t" style="left:1010.88px;top:757.60px;font-size:12.4px;color:#595959;transform:scaleX(0.9200);">28</span>
<span class="t" style="left:1033.48px;top:692.90px;font-size:12px;color:#262626;transform:scaleX(0.9200);">37</span>
<span class="t" style="left:1033.27px;top:757.60px;font-size:12.4px;color:#595959;transform:scaleX(0.9200);">29</span>
<span class="t" style="left:1055.87px;top:688.03px;font-size:12px;color:#262626;transform:scaleX(0.9200);">42</span>
<span class="t" style="left:1055.66px;top:757.60px;font-size:12.4px;color:#595959;transform:scaleX(0.9200);">30</span>
<span class="t" style="left:1078.26px;top:692.90px;font-size:12px;color:#262626;transform:scaleX(0.9200);">37</span>
<span class="t" style="left:1078.06px;top:757.60px;font-size:12.4px;color:#595959;transform:scaleX(0.9200);">31</span>
<div class="a" style="left:641.25px;top:789px;width:26.549999999999955px;height:6.2999999999999545px;background:#00b050;"></div>
<span class="t" style="left:671.40px;top:785.44px;font-size:12px;color:#595959;transform:scaleX(0.9279);">Ocupação inicial</span>
<div class="a" style="left:770.6px;top:790.1px;width:27.799999999999955px;height:2.0px;background:#262626;"></div>
<span class="t" style="left:801.00px;top:785.44px;font-size:12px;color:#595959;transform:scaleX(0.9011);">Total Saídas</span>
<div class="a" style="left:1126.3px;top:415.2px;width:382.70000000000005px;height:396.09999999999997px;background:#fff;border:1px solid #d9d9d9;"></div>
<div class="a" style="left:1138.1px;top:426.8px;width:203.70000000000005px;height:373.8px;background:#f2f2f2;"></div>
<div class="a" style="left:1138.1px;top:437.9px;width:64.17000000000007px;height:30.0px;background:#f4a68b;"></div>
<span class="t" style="left:1211.47px;top:448.09px;font-size:11px;color:#404040;transform:scaleX(0.9500);">63</span>
<div class="a" style="left:1355px;top:438.95px;width:6px;height:5.800000000000011px;background:#f4a68b;"></div>
<span class="t" style="left:1364.75px;top:434.63px;font-size:11.6px;color:#404040;transform:scaleX(0.9448);">N.º de Cesárias</span>
<div class="a" style="left:1138.1px;top:483.9px;width:13.240000000000009px;height:30.0px;background:#8eaadb;"></div>
<span class="t" style="left:1160.54px;top:494.09px;font-size:11px;color:#404040;transform:scaleX(0.9500);">13</span>
<div class="a" style="left:1355px;top:488.05px;width:6px;height:5.800000000000011px;background:#8eaadb;"></div>
<span class="t" style="left:1364.75px;top:483.73px;font-size:11.6px;color:#404040;transform:scaleX(0.9772);">N.º de Partos Normais</span>
<div class="a" style="left:1138.1px;top:529.9px;width:44.81000000000017px;height:30.0px;background:#5bb445;"></div>
<span class="t" style="left:1192.11px;top:540.09px;font-size:11px;color:#404040;transform:scaleX(0.9500);">44</span>
<div class="a" style="left:1355px;top:537.1500000000001px;width:6px;height:5.7999999999999545px;background:#5bb445;"></div>
<span class="t" style="left:1364.75px;top:532.83px;font-size:11.6px;color:#404040;transform:scaleX(0.9578);">N.º Cirurgia Emergência</span>
<div class="a" style="left:1138.1px;top:575.9px;width:9.170000000000073px;height:30.0px;background:#4a86c4;"></div>
<span class="t" style="left:1156.47px;top:586.09px;font-size:11px;color:#404040;transform:scaleX(0.9500);">9</span>
<div class="a" style="left:1355px;top:586.25px;width:6px;height:5.7999999999999545px;background:#4a86c4;"></div>
<span class="t" style="left:1364.75px;top:581.93px;font-size:11.6px;color:#404040;transform:scaleX(0.9726);">N.º Cirurgia Eletiva</span>
<div class="a" style="left:1138.1px;top:621.9px;width:136.48000000000002px;height:30.0px;background:#e3aa00;"></div>
<span class="t" style="left:1283.78px;top:632.09px;font-size:11px;color:#404040;transform:scaleX(0.9500);">134</span>
<div class="a" style="left:1355px;top:635.35px;width:6px;height:5.7999999999999545px;background:#e3aa00;"></div>
<span class="t" style="left:1364.75px;top:631.03px;font-size:11.6px;color:#404040;transform:scaleX(0.9859);">Proced. Ambulatoriais</span>
<div class="a" style="left:1138.1px;top:667.9px;width:20.37000000000012px;height:30.0px;background:#959595;"></div>
<span class="t" style="left:1167.67px;top:678.09px;font-size:11px;color:#404040;transform:scaleX(0.9500);">20</span>
<div class="a" style="left:1355px;top:684.45px;width:6px;height:5.7999999999999545px;background:#959595;"></div>
<span class="t" style="left:1364.75px;top:680.13px;font-size:11.6px;color:#404040;transform:scaleX(0.9483);">Consultas em Obs. 24h</span>
<div class="a" style="left:1138.1px;top:713.9px;width:42.7800000000002px;height:30.0px;background:#da7330;"></div>
<span class="t" style="left:1190.08px;top:724.09px;font-size:11px;color:#404040;transform:scaleX(0.9500);">42</span>
<div class="a" style="left:1355px;top:733.5500000000001px;width:6px;height:5.7999999999999545px;background:#da7330;"></div>
<span class="t" style="left:1364.75px;top:729.23px;font-size:11.6px;color:#404040;transform:scaleX(0.9412);">Consultas Urg. e Emerg.</span>
<div class="a" style="left:1138.1px;top:759.9px;width:149.72000000000003px;height:30.0px;background:#c00000;"></div>
<span class="t" style="left:1297.02px;top:770.09px;font-size:11px;color:#404040;transform:scaleX(0.9500);">147</span>
<div class="a" style="left:1355px;top:782.6500000000001px;width:6px;height:5.7999999999999545px;background:#c00000;"></div>
<span class="t" style="left:1364.75px;top:778.33px;font-size:11.6px;color:#404040;transform:scaleX(0.9347);">Consultas Especializadas</span>
</body></html>
